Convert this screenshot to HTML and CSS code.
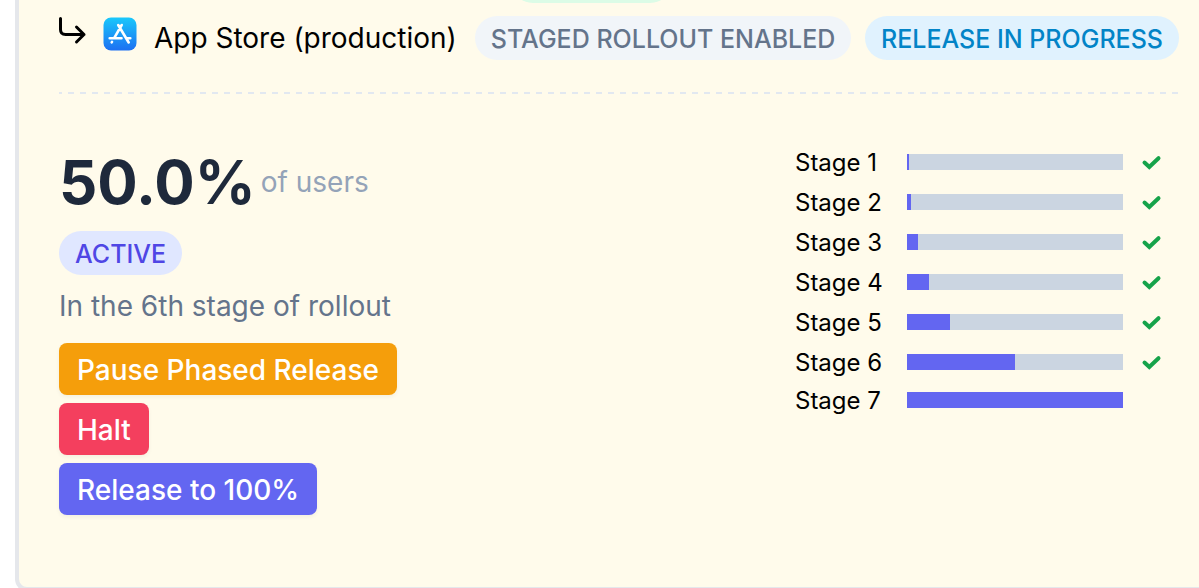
FILE: index.html
```html
<!DOCTYPE html>
<html lang="en">
<head>
<meta charset="utf-8">
<title>Staged rollout</title>
<link rel="stylesheet" href="styles.css">
</head>
<body>
<main class="card">
  <div class="previous"><span class="badge badge-done"></span></div>
  <header class="store">
    <svg class="arrow" viewBox="0 0 28 28" aria-hidden="true"><path d="M1.500 1.500V12.500Q1.500 17.500 6.500 17.500H25M17.500 10L25 17.500L17.500 25"/></svg>
    <svg class="logo" viewBox="0 0 34 34" aria-hidden="true">
      <defs><linearGradient id="sky" x1="0" y1="0" x2="0" y2="1"><stop offset="0" stop-color="#1ac8fb"/><stop offset="1" stop-color="#1d70f2"/></linearGradient></defs>
      <rect x="0.500" y="0.500" width="33" height="33" rx="7.500" fill="url(#sky)"/>
      <path d="M15.200 8L25.700 25.500M18.700 8L11.300 20.800M9 24.800L8.700 25.300M6.700 21.300H18.500M23.800 21.300H27.300"/>
    </svg>
    <h1 class="store-name">App Store (production)</h1>
    <span class="badge badge-muted">STAGED ROLLOUT ENABLED</span>
    <span class="badge badge-info">RELEASE IN PROGRESS</span>
  </header>
  <svg class="divider" height="2" aria-hidden="true"><line x1="0" y1="1" x2="100%" y2="1"/></svg>
  <div class="rollout">
    <section class="summary">
      <p class="share"><strong class="percent">50.0%</strong><span class="share-label">of users</span></p>
      <span class="badge badge-active">ACTIVE</span>
      <p class="stage-note">In the 6th stage of rollout</p>
      <div class="actions">
        <button class="button button-pause" type="button">Pause Phased Release</button>
        <button class="button button-halt" type="button">Halt</button>
        <button class="button button-release" type="button">Release to 100%</button>
      </div>
    </section>
    <ul class="stages">
      <li class="stage"><span class="stage-name">Stage 1</span><span class="bar"><span class="fill" style="width:1%"></span></span><svg class="check" viewBox="0 0 18 14" aria-label="Done"><path d="M1.500 7.500L6.300 12L15.500 3.200"/></svg></li>
      <li class="stage"><span class="stage-name">Stage 2</span><span class="bar"><span class="fill" style="width:2%"></span></span><svg class="check" viewBox="0 0 18 14" aria-label="Done"><path d="M1.500 7.500L6.300 12L15.500 3.200"/></svg></li>
      <li class="stage"><span class="stage-name">Stage 3</span><span class="bar"><span class="fill" style="width:5%"></span></span><svg class="check" viewBox="0 0 18 14" aria-label="Done"><path d="M1.500 7.500L6.300 12L15.500 3.200"/></svg></li>
      <li class="stage"><span class="stage-name">Stage 4</span><span class="bar"><span class="fill" style="width:10%"></span></span><svg class="check" viewBox="0 0 18 14" aria-label="Done"><path d="M1.500 7.500L6.300 12L15.500 3.200"/></svg></li>
      <li class="stage"><span class="stage-name">Stage 5</span><span class="bar"><span class="fill" style="width:20%"></span></span><svg class="check" viewBox="0 0 18 14" aria-label="Done"><path d="M1.500 7.500L6.300 12L15.500 3.200"/></svg></li>
      <li class="stage"><span class="stage-name">Stage 6</span><span class="bar"><span class="fill" style="width:50%"></span></span><svg class="check" viewBox="0 0 18 14" aria-label="Done"><path d="M1.500 7.500L6.300 12L15.500 3.200"/></svg></li>
      <li class="stage stage-pending"><span class="stage-name">Stage 7</span><span class="bar"><span class="fill" style="width:100%"></span></span></li>
    </ul>
  </div>
</main>
</body>
</html>
```
FILE: styles.css
```css
* { box-sizing: border-box; }
html { overflow: hidden; }
body {
  margin: 0;
  background: #fff;
  color: #000;
  font-family: Inter, "Liberation Sans", sans-serif;
  font-size: 24px;
  line-height: 36px;
}
h1, p, ul { margin: 0; padding: 0; }
.card {
  margin: -60px 0 0 15px;
  padding: 15px 20px 72px 40px;
  border: 4px solid #e5e7eb;
  border-right: 0;
  border-radius: 12px 0 0 12px;
  background: #fffbeb;
}
.previous { display: flex; padding-left: 452px; margin-bottom: 13px; }
.badge {
  display: inline-flex;
  align-items: center;
  height: 44px;
  padding: 2px 16px 0;
  border-radius: 22px;
  font-size: 25px;
  font-weight: 500;
  white-space: nowrap;
}
.badge-done { width: 161px; background: #dcfce7; }
.badge-muted { margin-left: 18px; background: #f1f5f9; color: #64748b; }
.badge-info { margin-left: auto; background: #e0f2fe; color: #0284c7; }
.badge-active { background: #e0e7ff; color: #4f46e5; }
.store { display: flex; align-items: center; }
.arrow { width: 28px; height: 28px; flex: none; margin-bottom: 14px; }
.arrow path { fill: none; stroke: #000; stroke-width: 3; stroke-linecap: round; stroke-linejoin: round; }
.logo { width: 34px; height: 34px; flex: none; margin: 0 17px 8px 16px; }
.logo path { fill: none; stroke: #fff; stroke-width: 2.6; stroke-linecap: round; }
.store-name { font-size: 28px; font-weight: 400; white-space: nowrap; }
.divider { display: block; width: 100%; margin-top: 32px; }
.divider line { stroke: #e2e8f0; stroke-width: 2; stroke-dasharray: 6 6; stroke-dashoffset: 3; }
.rollout { display: flex; justify-content: space-between; padding-top: 48px; }
.summary { display: flex; flex-direction: column; align-items: flex-start; }
.share { display: flex; align-items: center; gap: 5px; height: 80px; margin-bottom: 9px; }
.percent { font-size: 60px; line-height: 80px; font-weight: 700; color: #1e293b; }
.share-label { font-size: 28px; color: #94a3b8; }
.stage-note { margin: 13px 0 19px; font-size: 28px; color: #64748b; }
.actions { display: flex; flex-direction: column; align-items: flex-start; gap: 8px; }
.button {
  height: 52px;
  padding: 2px 18px 0;
  border: 0;
  border-radius: 8px;
  box-shadow: 0 2px 4px rgba(0, 0, 0, 0.05);
  color: #fff;
  font-family: inherit;
  font-size: 28px;
  font-weight: 500;
}
.button-pause { background: #f59e0b; }
.button-halt { background: #f43f5e; }
.button-release { background: #6366f1; }
.stages { list-style: none; }
.stage {
  display: grid;
  grid-template-columns: 92px 216px 18px;
  align-items: center;
  height: 40px;
  padding-right: 18px;
  column-gap: 20px;
  line-height: 32px;
}
.stage-pending { height: 36px; }
.stage-name { padding-top: 2px; }
.bar { height: 16px; background: #cbd5e1; }
.fill { display: block; height: 16px; background: #6366f1; }
.check { width: 18px; height: 14px; overflow: visible; }
.check path { fill: none; stroke: #16a34a; stroke-width: 4; stroke-linecap: round; }
```
